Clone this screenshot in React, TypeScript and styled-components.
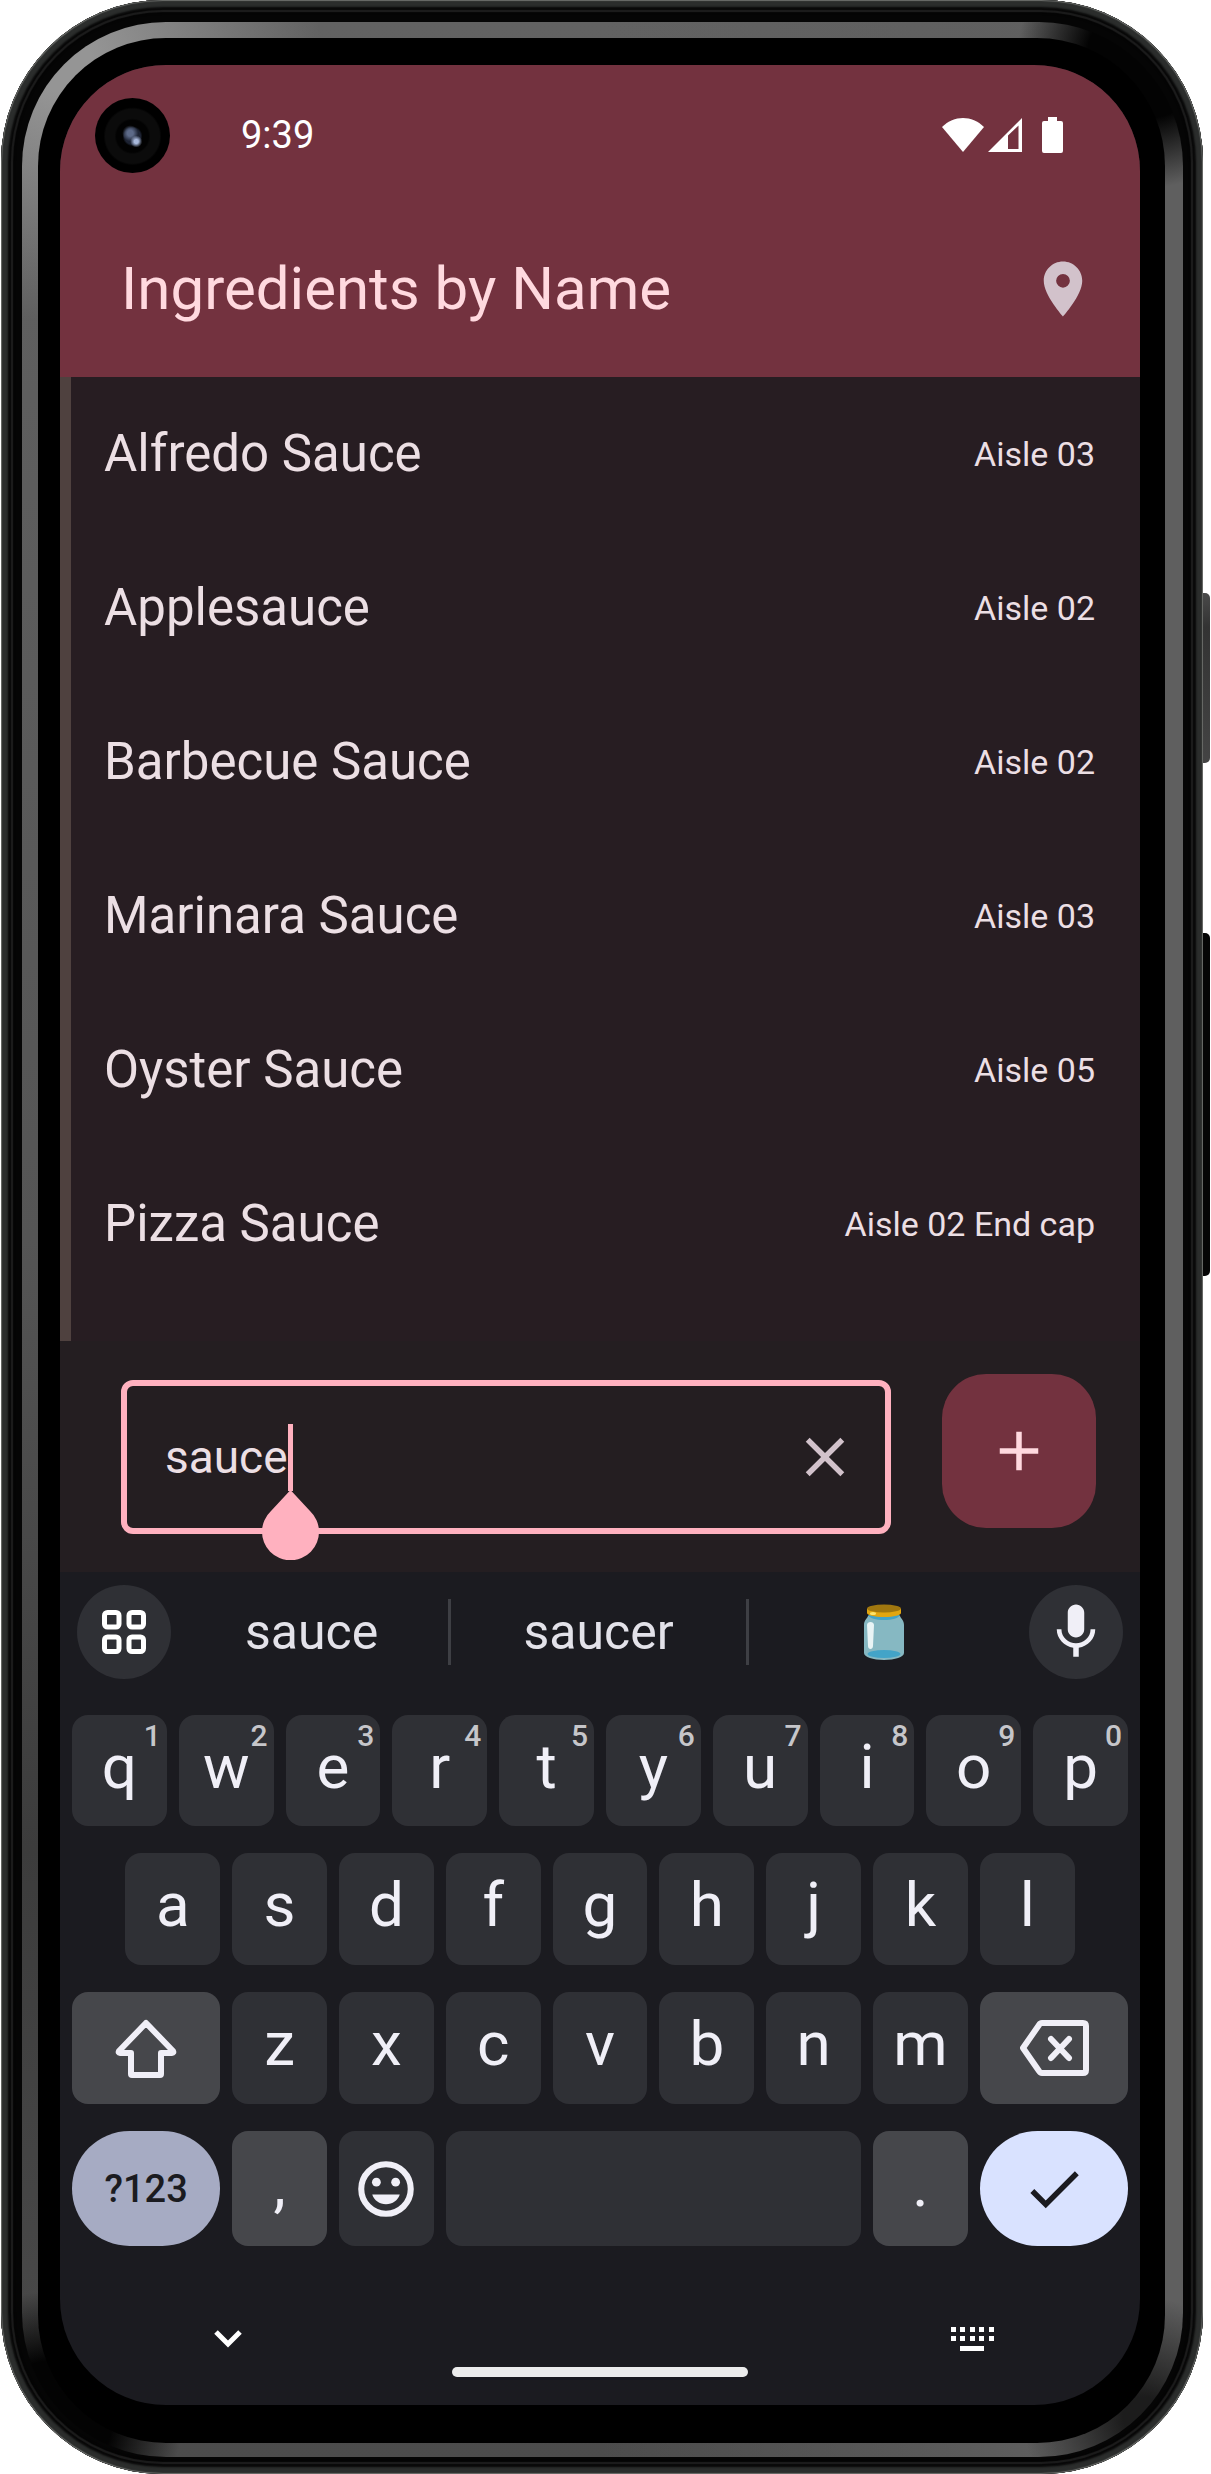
import React, { useState } from "react";
import styled, { createGlobalStyle, css } from "styled-components";
import { MdAdd, MdCheck, MdClose, MdLocationOn, MdMic } from "react-icons/md";

const color = {
  header: "#73323f",
  onHeader: "#ffd9df",
  list: "#271d22",
  searchBar: "#241e21",
  text: "#ecdfe4",
  muted: "#d2c2cb",
  accent: "#ffb1bf",
  keyboard: "#1b1b20",
  key: "#2f3035",
  modifier: "#46474b",
  keyText: "#f0eff7",
  hint: "#c6c6ca",
};

const GlobalStyle = createGlobalStyle`
  *, *::before, *::after { box-sizing: border-box; }
  body {
    margin: 0;
    background: #fff;
    font-family: Roboto, "Noto Sans", sans-serif;
  }
  button, input { font-family: inherit; }
`;

/* ---------- device ---------- */

const Device = styled.div`
  position: relative;
  margin: 0 8px 0 1px;
  padding: 22px 20px 17px 21px;
  border-radius: 162px;
  background: #050505;
  box-shadow:
    inset 0 0 1px 1px #6d6f6c,
    inset 0 0 2px 7px #2b2d2c,
    inset 0 0 1px 10px #080808,
    inset 0 0 1px 12px #1e1e1e,
    inset 0 0 1px 14px #050505;
`;

const SideButton = styled.span<{ $top: number; $height: number; $tone: string }>`
  position: absolute;
  left: 100%;
  top: ${(p) => p.$top}px;
  width: 7px;
  height: ${(p) => p.$height}px;
  border-radius: 0 5px 5px 0;
  background: ${(p) => p.$tone};
`;

const Ring = styled.div`
  padding: 16px 18px 14px 16px;
  border-radius: 144px;
  background:
    radial-gradient(circle at calc(100% - 36px) 36px, #030303 60px, transparent 130px),
    radial-gradient(circle at 30px calc(100% - 36px), #030303 60px, transparent 130px),
    radial-gradient(circle at calc(100% - 40px) calc(100% - 40px), #1c1c1c 20px, transparent 120px),
    radial-gradient(circle at 40px 40px, #959595 30px, transparent 260px),
    linear-gradient(90deg, transparent 50%, #5f5f5f 90%),
    linear-gradient(180deg, #626262, #555 50%, #3c3c3c 75%, #4c4c4c);
`;

const Bezel = styled.div`
  padding: 27px 25px 38px 22px;
  border-radius: 128px;
  background: #000;
`;

const Screen = styled.main`
  overflow: hidden;
  border-radius: 106px;
  background: ${color.keyboard};
`;

/* ---------- header ---------- */

const Header = styled.header`
  background: ${color.header};
`;

const StatusBar = styled.div`
  display: flex;
  align-items: center;
  height: 136px;
  padding: 4px 77px 0 35px;
  color: #fff;
`;

const Camera = styled.span`
  width: 75px;
  height: 75px;
  margin-right: 71px;
  border-radius: 50%;
  background:
    radial-gradient(circle at 55% 58%, #a9b9dc 0 2px, transparent 6px),
    radial-gradient(circle at 47% 47%, #5d6a88 0 3px, transparent 8px),
    radial-gradient(circle at 50% 51%, #1d2333 0 8px, #020202 10px 16px, #0b0b0b 18px 27px, #000 29px);
`;

const Clock = styled.time`
  flex: 1;
  font-size: 38px;
  line-height: 44px;
`;

const StatusIcons = styled.div`
  display: flex;
  align-items: center;
  gap: 4px;

  svg:last-child { margin-left: 16px; }
`;

const AppBar = styled.div`
  display: flex;
  align-items: center;
  justify-content: space-between;
  height: 176px;
  padding: 0 44px 0 61px;
`;

const Title = styled.h1`
  margin: 0;
  color: ${color.onHeader};
  font-size: 60px;
  font-weight: 400;
  line-height: 76px;
`;

const IconButton = styled.button`
  display: grid;
  place-items: center;
  padding: 0;
  border: 0;
  background: none;
  color: ${color.muted};
  cursor: pointer;
`;

/* ---------- list ---------- */

const List = styled.ul`
  margin: 0;
  padding: 0 0 40px;
  border-left: 11px solid #4f413f;
  background: ${color.list};
  list-style: none;
`;

const Row = styled.li`
  display: flex;
  align-items: center;
  justify-content: space-between;
  height: 154px;
  padding: 0 45px 0 33px;
  color: ${color.text};
`;

const Name = styled.span`
  font-size: 51px;
  line-height: 66px;
`;

const Aisle = styled.span`
  font-size: 34px;
  line-height: 44px;
`;

/* ---------- search ---------- */

const SearchBar = styled.form`
  display: flex;
  gap: 51px;
  padding: 33px 44px 38px 61px;
  background: ${color.searchBar};
`;

const FieldSlot = styled.div`
  flex: 1;
  min-width: 0;
  padding-top: 6px;
`;

const Field = styled.div`
  position: relative;
  display: flex;
  height: 154px;
  border: 6px solid ${color.accent};
  border-radius: 12px;

  ${IconButton} { width: 120px; }
`;

const SearchInput = styled.input`
  flex: 1;
  min-width: 0;
  padding: 0 0 0 38px;
  border: 0;
  outline: 0;
  background: none;
  color: ${color.text};
  caret-color: transparent;
  font-size: 46px;
  line-height: 66px;
`;

const Caret = styled.svg`
  position: absolute;
  left: 135px;
  top: 38px;
  width: 57px;
  height: 136px;
  fill: ${color.accent};
  pointer-events: none;
`;

const AddButton = styled.button`
  display: grid;
  place-items: center;
  width: 154px;
  height: 154px;
  padding: 0;
  border: 0;
  border-radius: 44px;
  background: ${color.header};
  color: ${color.onHeader};
  cursor: pointer;
`;

/* ---------- keyboard ---------- */

const Keyboard = styled.section`
  background: ${color.keyboard};
`;

const SuggestionBar = styled.div`
  display: flex;
  align-items: center;
  padding: 13px 17px 36px;
`;

const RoundButton = styled.button`
  display: grid;
  place-items: center;
  width: 94px;
  height: 94px;
  padding: 0;
  border: 0;
  border-radius: 50%;
  background: ${color.key};
  color: ${color.keyText};
`;

const Suggestions = styled.div`
  flex: 1;
  display: grid;
  grid-template-columns: 11fr 12fr 11fr;
  margin: 0 10px 0 4px;
`;

const Suggestion = styled.button`
  display: grid;
  place-items: center;
  height: 66px;
  padding: 0;
  border: 0;
  background: none;
  color: #e3e2e9;
  font-size: 50px;
  line-height: 66px;

  & + & { border-left: 3px solid #3e3f44; }
`;

const Keys = styled.div`
  display: grid;
  grid-template-columns: repeat(20, 1fr);
  grid-template-rows: 111px repeat(2, 112px) 115px;
  gap: 27px 12px;
  padding: 0 12px;
`;

const Key = styled.button<{ $span?: number; $start?: number; $kind?: "modifier" | "symbols" | "done" }>`
  position: relative;
  grid-column: ${(p) => p.$start ?? "auto"} / span ${(p) => p.$span ?? 2};
  display: grid;
  place-items: center;
  min-width: 0;
  padding: 0 0 8px;
  border: 0;
  border-radius: 16px;
  background: ${color.key};
  color: ${color.keyText};
  font-size: 62px;
  line-height: 72px;

  ${(p) => p.$kind === "modifier" && css`background: ${color.modifier};`}
  ${(p) =>
    (p.$kind === "symbols" || p.$kind === "done") &&
    css`
      padding: 0;
      border-radius: 58px;
      background: ${p.$kind === "done" ? "#d9e2ff" : "#a6abc3"};
      color: ${color.keyboard};
      font-size: 38px;
      font-weight: 500;
    `}
  svg { margin-top: 8px; }
  ${(p) => p.$kind === "done" && css`svg { margin: 0; }`}
`;

const Hint = styled.span`
  position: absolute;
  top: 4px;
  right: 6px;
  color: ${color.hint};
  font-size: 30px;
  font-weight: 500;
  line-height: 34px;
`;

const NavBar = styled.nav`
  display: flex;
  flex-direction: column;
  gap: 11px;
  padding: 76px 0 28px;
`;

const NavIcons = styled.div`
  display: flex;
  justify-content: space-between;
  padding: 0 146px;
`;

const NavButton = styled(IconButton)`
  width: 44px;
  height: 34px;
  color: #fff;
`;

const HomeHandle = styled.span`
  align-self: center;
  width: 296px;
  max-width: 50%;
  height: 10px;
  border-radius: 5px;
  background: #ececec;
`;

/* ---------- drawings ---------- */

const Wifi = () => (
  <svg width="42" height="34" viewBox="0 0 42 34" fill="#fff" aria-hidden="true">
    <path d="M0 9C12-3 30-3 42 9L21 34Z" />
  </svg>
);

const Signal = () => (
  <svg width="34" height="34" viewBox="0 0 34 34" fill="#fff" fillRule="evenodd" aria-hidden="true">
    <path d="M34 0V34H0ZM20 17.500V31H30.500V7.500Z" />
  </svg>
);

const Battery = () => (
  <svg width="21" height="36" viewBox="0 0 21 36" fill="#fff" aria-hidden="true">
    <path d="M6 0h9v4h4a2 2 0 0 1 2 2v28a2 2 0 0 1-2 2H2a2 2 0 0 1-2-2V6a2 2 0 0 1 2-2h4Z" />
  </svg>
);

const Apps = () => (
  <svg width="44" height="44" viewBox="0 0 44 44" fill="none" stroke="#fff" strokeWidth="5" aria-hidden="true">
    {[2.5, 27].map((x) =>
      [2.5, 27].map((y) => <rect key={`${x}-${y}`} x={x} y={y} width="14.500" height="14.500" rx="3" />),
    )}
  </svg>
);

const Jar = () => (
  <svg width="40" height="56" viewBox="0 0 40 56" aria-hidden="true">
    <path d="M4 12h32c1 3 4 4 4 9v28c0 4-9 7-20 7S0 53 0 49V21c0-5 3-6 4-9Z" fill="#86b8c2" />
    <path d="M4 11h32c-1 3-8 5-16 5S5 14 4 11Z" fill="#43a4c8" />
    <ellipse cx="20" cy="50" rx="16.500" ry="4" fill="#43a4c8" />
    <path d="M3 5h34v4c0 2-7 4-17 4S3 11 3 9Z" fill="#e2a610" />
    <ellipse cx="20" cy="4.500" rx="17" ry="4" fill="#a0770f" />
    <ellipse cx="9" cy="9.500" rx="3" ry="1.500" fill="#ffe36a" />
    <path d="M3 21c0-4 7-4 7 0l-1 21c0 4-5 4-5 0Z" fill="#e9f4f5" />
  </svg>
);

const Shift = () => (
  <svg width="66" height="66" viewBox="0 0 66 66" fill="none" stroke="currentColor" strokeWidth="6" strokeLinejoin="round" aria-hidden="true">
    <path d="M33 8 6 36q-1 2 1 2H18V59q0 1 1 1H47q1 0 1-1V38H59q2 0 1-2Z" />
  </svg>
);

const Backspace = () => (
  <svg width="76" height="62" viewBox="0 0 76 62" fill="none" stroke="currentColor" strokeWidth="6" strokeLinejoin="round" strokeLinecap="round" aria-hidden="true">
    <path d="M7 31 23 8q1-2 3-2H67q3 0 3 3V53q0 3-3 3H26q-2 0-3-2ZM35 22 53 41M53 22 35 41" />
  </svg>
);

const Smiley = () => (
  <svg width="66" height="66" viewBox="0 0 24 24" fill="currentColor" aria-hidden="true">
    <circle cx="12" cy="12" r="9" fill="none" stroke="currentColor" strokeWidth="2.200" />
    <circle cx="8.500" cy="9.500" r="1.600" />
    <circle cx="15.500" cy="9.500" r="1.600" />
    <path d="M7 14h10c-.7 2.200-2.600 3.500-5 3.500S7.700 16.200 7 14Z" />
  </svg>
);

const ChevronDown = () => (
  <svg width="28" height="20" viewBox="0 0 28 20" fill="none" stroke="currentColor" strokeWidth="5" aria-hidden="true">
    <path d="M2 3 14 15 26 3" />
  </svg>
);

const KeyboardGlyph = () => (
  <svg width="43" height="24" viewBox="0 0 43 24" fill="currentColor" aria-hidden="true">
    {[0, 9, 19, 28, 38].map((x) => (
      <path key={x} d={`M${x} 0h5v5h-5ZM${x} 9h5v5h-5Z`} />
    ))}
    <path d="M9 19h24v5H9Z" />
  </svg>
);

/* ---------- data ---------- */

const ingredients = [
  ["Alfredo Sauce", "Aisle 03"],
  ["Applesauce", "Aisle 02"],
  ["Barbecue Sauce", "Aisle 02"],
  ["Marinara Sauce", "Aisle 03"],
  ["Oyster Sauce", "Aisle 05"],
  ["Pizza Sauce", "Aisle 02 End cap"],
];

export default function App() {
  const [query, setQuery] = useState("sauce");
  const type = (text: string) => setQuery((q) => q + text);

  return (
    <>
      <GlobalStyle />
      <Device>
        <SideButton $top={593} $height={170} $tone="linear-gradient(#4a4a4a, #333 20%, #444)" />
        <SideButton $top={933} $height={343} $tone="#050505" />
        <Ring>
          <Bezel>
            <Screen>
              <Header>
                <StatusBar>
                  <Camera />
                  <Clock>9:39</Clock>
                  <StatusIcons>
                    <Wifi />
                    <Signal />
                    <Battery />
                  </StatusIcons>
                </StatusBar>
                <AppBar>
                  <Title>Ingredients by Name</Title>
                  <IconButton aria-label="Sort by location">
                    <MdLocationOn size={66} />
                  </IconButton>
                </AppBar>
              </Header>

              <List>
                {ingredients.map(([name, aisle]) => (
                  <Row key={name}>
                    <Name>{name}</Name>
                    <Aisle>{aisle}</Aisle>
                  </Row>
                ))}
              </List>

              <SearchBar onSubmit={(e) => e.preventDefault()}>
                <FieldSlot>
                  <Field>
                    <SearchInput aria-label="Search ingredients" value={query} onChange={(e) => setQuery(e.target.value)} />
                    <IconButton type="button" aria-label="Clear" onClick={() => setQuery("")}>
                      <MdClose size={66} />
                    </IconButton>
                    {query === "sauce" && (
                      <Caret viewBox="0 0 57 136" aria-hidden="true">
                        <path d="M26 0h5v67h-5Z" />
                        <path d="M28.500 66 48 87a28.500 28.500 0 1 1-39 0Z" />
                      </Caret>
                    )}
                  </Field>
                </FieldSlot>
                <AddButton aria-label="Add ingredient">
                  <MdAdd size={66} />
                </AddButton>
              </SearchBar>

              <Keyboard aria-label="Keyboard">
                <SuggestionBar>
                  <RoundButton aria-label="Keyboard menu"><Apps /></RoundButton>
                  <Suggestions>
                    <Suggestion onClick={() => setQuery("sauce")}>sauce</Suggestion>
                    <Suggestion onClick={() => setQuery("saucer")}>saucer</Suggestion>
                    <Suggestion aria-label="Jar"><Jar /></Suggestion>
                  </Suggestions>
                  <RoundButton aria-label="Voice input"><MdMic size={66} /></RoundButton>
                </SuggestionBar>
                <Keys>
                  {[..."qwertyuiop"].map((letter, i) => (
                    <Key key={letter} onClick={() => type(letter)}>
                      {letter}
                      <Hint>{(i + 1) % 10}</Hint>
                    </Key>
                  ))}
                  {[..."asdfghjkl"].map((letter, i) => (
                    <Key key={letter} $start={i * 2 + 2} onClick={() => type(letter)}>{letter}</Key>
                  ))}
                  <Key $kind="modifier" $start={1} $span={3} aria-label="Shift"><Shift /></Key>
                  {[..."zxcvbnm"].map((letter) => (
                    <Key key={letter} onClick={() => type(letter)}>{letter}</Key>
                  ))}
                  <Key $kind="modifier" $span={3} aria-label="Backspace" onClick={() => setQuery((q) => q.slice(0, -1))}>
                    <Backspace />
                  </Key>
                  <Key $kind="symbols" $span={3}>?123</Key>
                  <Key $kind="modifier" onClick={() => type(",")}>,</Key>
                  <Key aria-label="Emoji"><Smiley /></Key>
                  <Key $span={8} aria-label="Space" onClick={() => type(" ")} />
                  <Key $kind="modifier" onClick={() => type(".")}>.</Key>
                  <Key $kind="done" $span={3} aria-label="Done"><MdCheck size={66} /></Key>
                </Keys>
              </Keyboard>

              <NavBar aria-label="System">
                <NavIcons>
                  <NavButton aria-label="Hide keyboard"><ChevronDown /></NavButton>
                  <NavButton aria-label="Switch keyboard"><KeyboardGlyph /></NavButton>
                </NavIcons>
                <HomeHandle />
              </NavBar>
            </Screen>
          </Bezel>
        </Ring>
      </Device>
    </>
  );
}
